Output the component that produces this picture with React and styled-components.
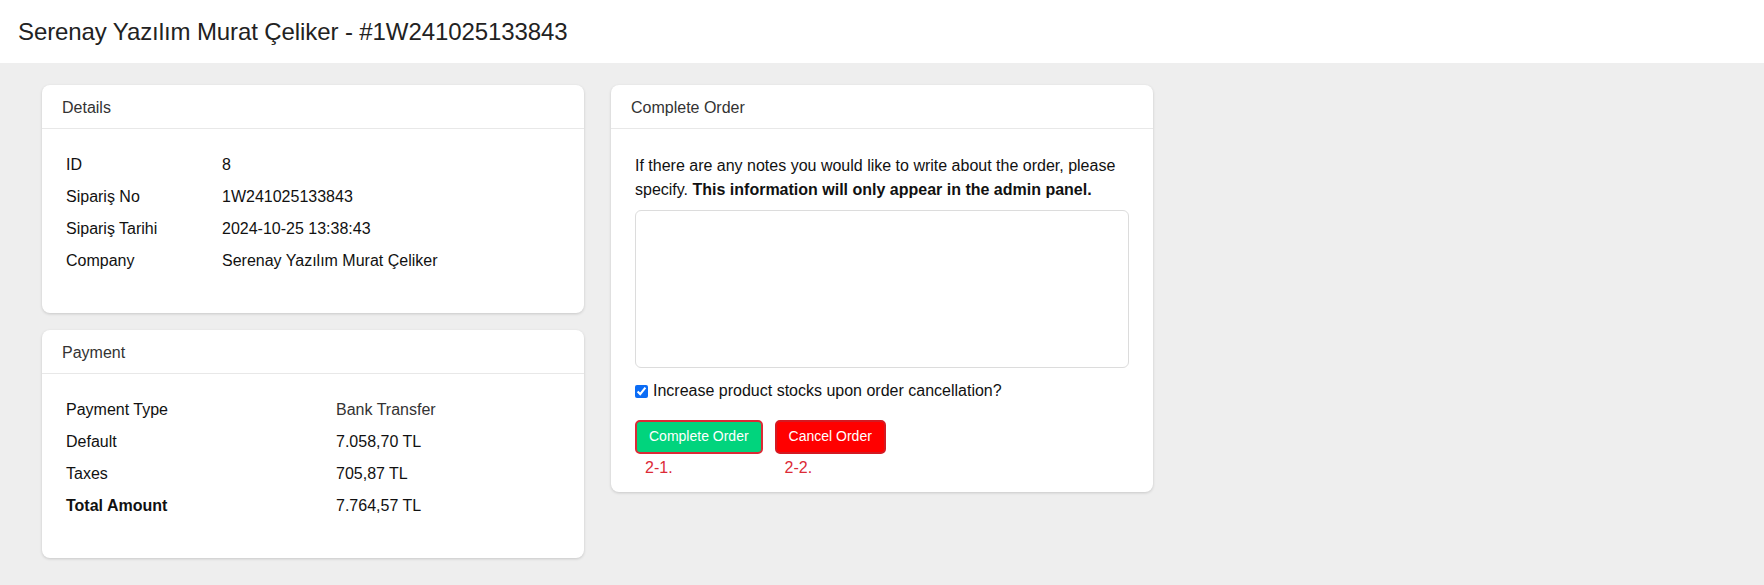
import React from "react";
import styled, { createGlobalStyle } from "styled-components";

const GlobalStyle = createGlobalStyle`
  html, body { margin: 0; padding: 0; }
  body {
    background: #eeeeee;
    font-family: "Liberation Sans", Arial, Helvetica, sans-serif;
    color: #111;
    font-size: 16px;
  }
  * { box-sizing: border-box; }
`;

const Page = styled.div`
  min-height: 585px;
  background: #eeeeee;
`;

const TopBar = styled.header`
  height: 63px;
  background: #fff;
  display: flex;
  align-items: center;
  padding-left: 18px;
`;

const Title = styled.h1`
  margin: 0;
  font-size: 24px;
  font-weight: 400;
  color: #222;
  letter-spacing: -0.1px;
`;

const Main = styled.main`
  display: grid;
  grid-template-columns: 542px 542px;
  column-gap: 27px;
  align-items: start;
  padding: 22px 0 0 42px;
`;

const Column = styled.div`
  display: flex;
  flex-direction: column;
  gap: 17px;
`;

const Card = styled.section`
  background: #fff;
  border-radius: 8px;
  box-shadow: 0 1px 3px rgba(0, 0, 0, 0.16);
`;

const CardHeader = styled.div`
  height: 44px;
  display: flex;
  align-items: center;
  padding: 2px 0 0 20px;
  border-bottom: 1px solid #e8e8e8;
  font-size: 16px;
  color: #333;
`;

const CardBody = styled.div`
  padding: ${(p) => p.$pad || "20px 24px 36px"};
`;

const InfoTable = styled.div`
  display: grid;
  grid-template-columns: ${(p) => p.$labelWidth}px 1fr;
  grid-auto-rows: 32px;
  align-items: center;
`;

const Label = styled.div`
  font-size: 16px;
  color: #111;
  font-weight: ${(p) => (p.$bold ? 700 : 400)};
`;

const Value = styled.div`
  font-size: 16px;
  color: ${(p) => (p.$muted ? "#333" : "#111")};
`;

const Note = styled.p`
  margin: 4px 0 0;
  font-size: 16px;
  line-height: 24px;
  color: #111;

  strong { font-weight: 700; }
`;

const NoteArea = styled.textarea`
  display: block;
  width: 100%;
  height: 158px;
  margin-top: 8px;
  border: 1px solid #dcdcdc;
  border-radius: 6px;
  resize: none;
  outline: none;
  font-family: inherit;
  font-size: 16px;
  padding: 8px;
`;

const CheckRow = styled.label`
  display: flex;
  align-items: center;
  gap: 5px;
  margin-top: 11px;
  height: 24px;
  font-size: 16px;
  color: #111;
`;

const Check = styled.input`
  width: 13px;
  height: 13px;
  margin: 0;
  accent-color: #0b6cf5;
`;

const Actions = styled.div`
  display: flex;
  gap: 12px;
  margin-top: 17px;
`;

const ActionGroup = styled.div`
  display: flex;
  flex-direction: column;
  align-items: flex-start;
`;

const ActionButton = styled.button`
  font-family: inherit;
  font-size: 14px;
  line-height: 19px;
  color: #fff;
  padding: 5px 12px 6px;
  border-radius: 5px;
  border: 2px solid ${(p) => (p.$variant === "success" ? "#dc2a36" : "#d41a22")};
  background: ${(p) => (p.$variant === "success" ? "#01d47d" : "#ff0000")};
  cursor: pointer;
`;

const StepTag = styled.span`
  padding-left: 10px;
  margin-top: 4px;
  font-size: 16px;
  line-height: 20px;
  color: #dc2a36;
`;

const details = [
  ["ID", "8"],
  ["Sipariş No", "1W241025133843"],
  ["Sipariş Tarihi", "2024-10-25 13:38:43"],
  ["Company", "Serenay Yazılım Murat Çeliker"],
];

const payment = [
  { label: "Payment Type", value: "Bank Transfer", muted: true },
  { label: "Default", value: "7.058,70 TL" },
  { label: "Taxes", value: "705,87 TL" },
  { label: "Total Amount", value: "7.764,57 TL", bold: true },
];

export default function App() {
  return (
    <Page>
      <GlobalStyle />
      <TopBar>
        <Title>Serenay Yazılım Murat Çeliker - #1W241025133843</Title>
      </TopBar>
      <Main>
        <Column>
          <Card>
            <CardHeader>Details</CardHeader>
            <CardBody>
              <InfoTable $labelWidth={156}>
                {details.map(([l, v]) => (
                  <React.Fragment key={l}>
                    <Label>{l}</Label>
                    <Value>{v}</Value>
                  </React.Fragment>
                ))}
              </InfoTable>
            </CardBody>
          </Card>
          <Card>
            <CardHeader>Payment</CardHeader>
            <CardBody>
              <InfoTable $labelWidth={270}>
                {payment.map((r) => (
                  <React.Fragment key={r.label}>
                    <Label $bold={r.bold}>{r.label}</Label>
                    <Value $muted={r.muted}>{r.value}</Value>
                  </React.Fragment>
                ))}
              </InfoTable>
            </CardBody>
          </Card>
        </Column>
        <Column>
          <Card>
            <CardHeader>Complete Order</CardHeader>
            <CardBody $pad="21px 24px 14px">
              <Note>
                If there are any notes you would like to write about the order, please
                specify. <strong>This information will only appear in the admin panel.</strong>
              </Note>
              <NoteArea />
              <CheckRow>
                <Check type="checkbox" defaultChecked />
                Increase product stocks upon order cancellation?
              </CheckRow>
              <Actions>
                <ActionGroup>
                  <ActionButton $variant="success">Complete Order</ActionButton>
                  <StepTag>2-1.</StepTag>
                </ActionGroup>
                <ActionGroup>
                  <ActionButton $variant="danger">Cancel Order</ActionButton>
                  <StepTag>2-2.</StepTag>
                </ActionGroup>
              </Actions>
            </CardBody>
          </Card>
        </Column>
      </Main>
    </Page>
  );
}
